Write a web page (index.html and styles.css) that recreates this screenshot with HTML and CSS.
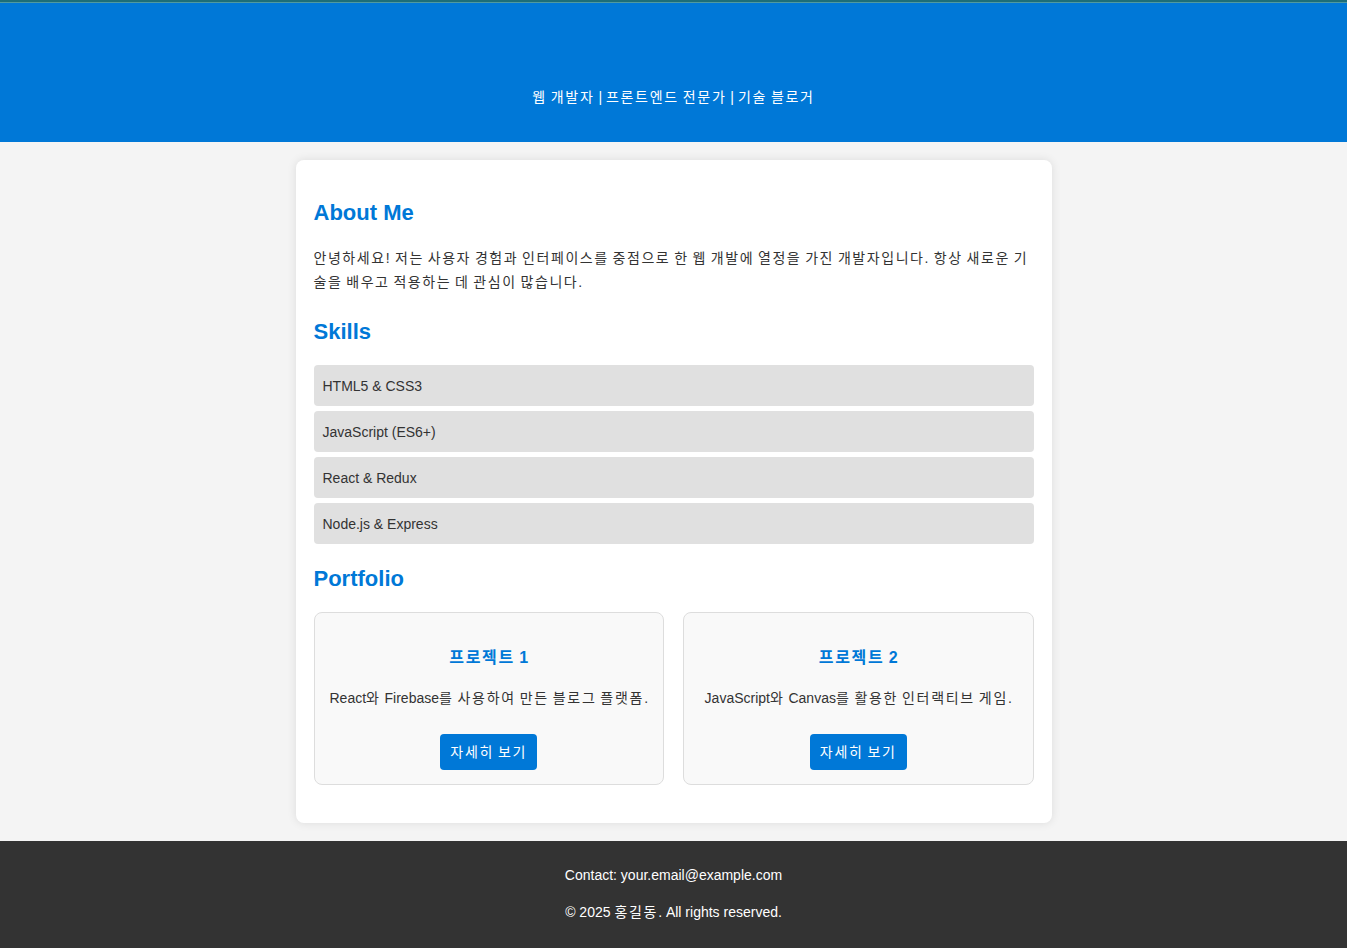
FILE: index.html
```html
<!DOCTYPE html>
<html lang="ko">
<head>
<meta charset="utf-8">
<title>Portfolio</title>
<link rel="stylesheet" href="styles.css">
</head>
<body>
<header class="site-header">
  <div class="topline"></div>
  <p class="subtitle"><span class="ko">웹 개발자</span> | <span class="ko">프론트엔드 전문가</span> | <span class="ko">기술 블로거</span></p>
</header>
<main class="container">
  <section class="section">
    <h2 class="section-title">About Me</h2>
    <p class="about-text ko">안녕하세요! 저는 사용자 경험과 인터페이스를 중점으로 한 웹 개발에 열정을 가진 개발자입니다. 항상 새로운 기술을 배우고 적용하는 데 관심이 많습니다.</p>
  </section>
  <section class="section">
    <h2 class="section-title">Skills</h2>
    <ul class="skills">
      <li class="skill">HTML5 &amp; CSS3</li>
      <li class="skill">JavaScript (ES6+)</li>
      <li class="skill">React &amp; Redux</li>
      <li class="skill">Node.js &amp; Express</li>
    </ul>
  </section>
  <section class="section">
    <h2 class="section-title">Portfolio</h2>
    <div class="projects">
      <div class="project">
        <h3 class="project-title"><span class="ko">프로젝트</span> 1</h3>
        <p class="project-desc">React<span class="ko">와</span> Firebase<span class="ko">를 사용하여 만든 블로그 플랫폼</span>.</p>
        <a class="btn" href="#"><span class="ko">자세히 보기</span></a>
      </div>
      <div class="project">
        <h3 class="project-title"><span class="ko">프로젝트</span> 2</h3>
        <p class="project-desc">JavaScript<span class="ko">와</span> Canvas<span class="ko">를 활용한 인터랙티브 게임</span>.</p>
        <a class="btn" href="#"><span class="ko">자세히 보기</span></a>
      </div>
    </div>
  </section>
</main>
<footer class="site-footer">
  <p class="footer-line">Contact: your.email@example.com</p>
  <p class="footer-line">© 2025 <span class="ko">홍길동</span>. All rights reserved.</p>
</footer>
</body>
</html>
```
FILE: styles.css
```css
* { box-sizing: border-box; }
html, body { margin: 0; padding: 0; }
body {
  font-family: "Liberation Sans", Arial, "Noto Sans CJK KR", sans-serif;
  font-size: 14px;
  color: #333;
  background: #f4f4f4;
}
.ko { letter-spacing: 1.7px; word-spacing: -1.7px; }
.about-text.ko { letter-spacing: 1.55px; word-spacing: -1.55px; word-break: break-all; }
.site-header {
  background: #0078d7;
  color: #fff;
  text-align: center;
  height: 142px;
}
.topline {
  height: 3px;
  background: linear-gradient(to bottom, #1d6e78 0, #1d6e78 2px, #4f9aa0 2px, #4f9aa0 3px);
}
.subtitle {
  margin: 0;
  padding-top: 85px;
  font-size: 14px;
  line-height: 18px;
}
.container {
  width: 756px;
  margin: 18px auto 18px;
  background: #fff;
  border-radius: 8px;
  box-shadow: 0 0 10px rgba(0,0,0,0.1);
  padding: 40px 18px 38px;
}
.section-title {
  color: #0078d7;
  font-size: 22px;
  font-weight: bold;
  margin: 0 0 20px;
  line-height: 26px;
}
.section { margin: 0; }
.about-text {
  margin: 0 0 25px;
  line-height: 24px;
}
.skills {
  list-style: none;
  margin: 3px 0 22px;
  padding: 0;
  display: flex;
  flex-direction: column;
  gap: 5px;
}
.skill {
  background: #e0e0e0;
  border-radius: 4px;
  height: 41px;
  padding: 0 9px;
  display: flex;
  align-items: center;
}
.projects {
  margin-top: 1px;
  display: grid;
  grid-template-columns: 1fr 1fr;
  gap: 19px;
}
.project {
  background: #f9f9f9;
  border: 1px solid #ddd;
  border-radius: 8px;
  text-align: center;
  padding: 35px 8px 14px;
  height: 173px;
}
.project-title {
  color: #0078d7;
  font-size: 16px;
  font-weight: bold;
  margin: 0 0 20px;
  line-height: 20px;
}
.project-desc {
  margin: 0 0 26px;
  line-height: 20px;
  white-space: nowrap;
}
.btn {
  display: inline-block;
  background: #0078d7;
  color: #fff;
  text-decoration: none;
  border-radius: 4px;
  height: 36px;
  line-height: 36px;
  padding: 0 10px;
  font-size: 14px;
}
.site-footer {
  background: #333;
  color: #fff;
  text-align: center;
  padding: 25px 0 20px;
  height: 107px;
}
.footer-line {
  margin: 0 0 19px;
  line-height: 18px;
}
```
